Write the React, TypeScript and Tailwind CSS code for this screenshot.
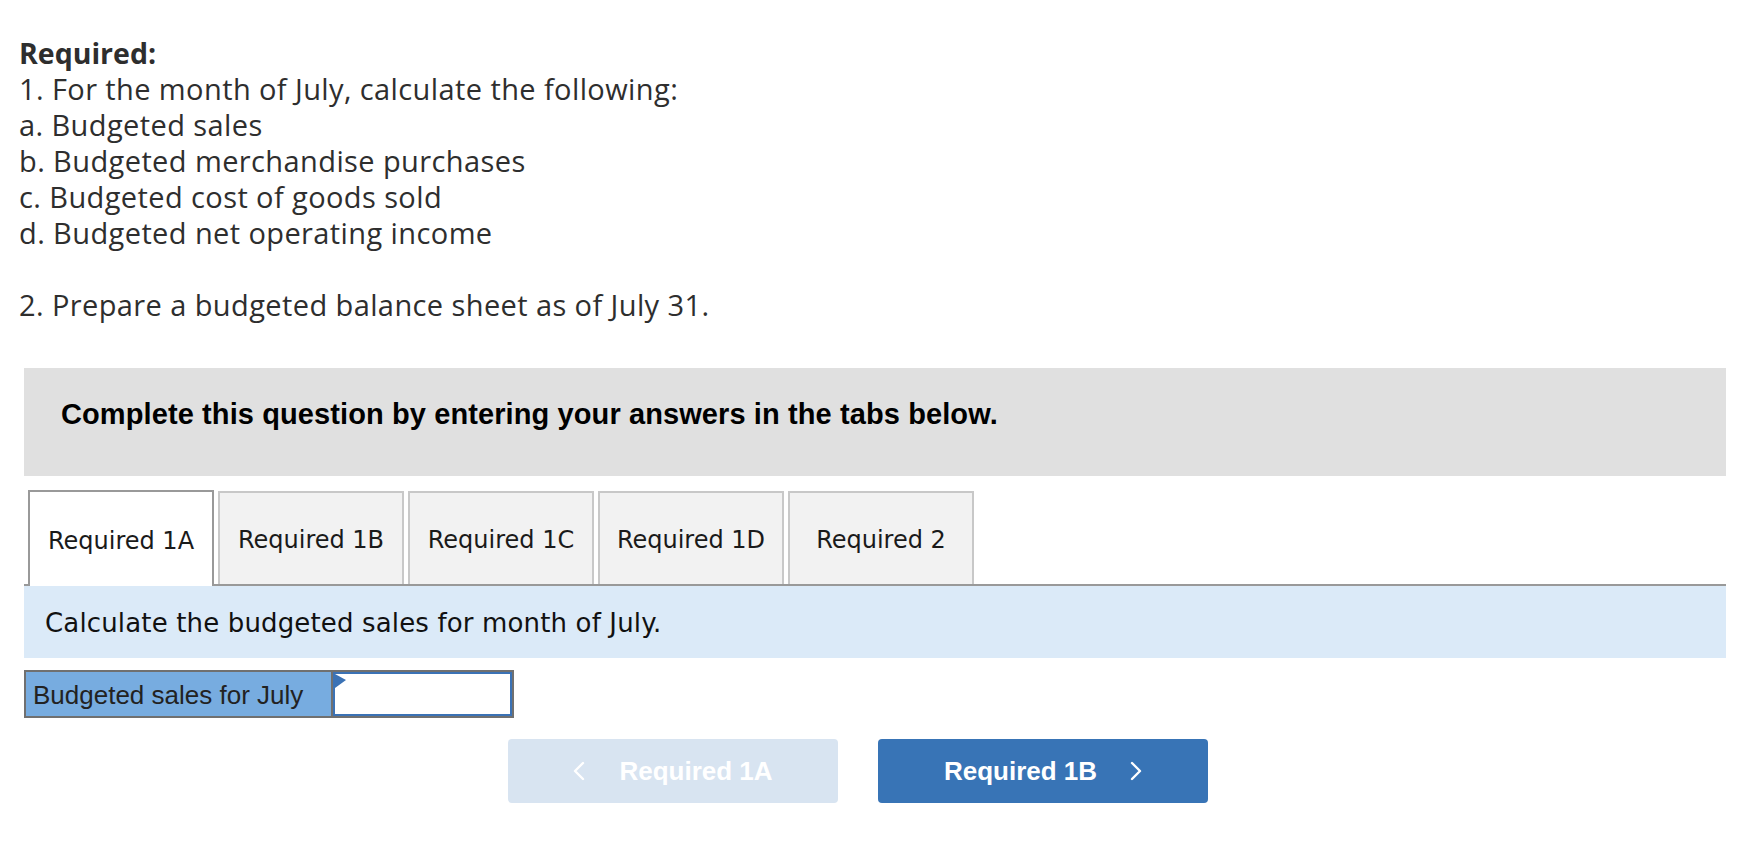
import React from "react";

const tabs = ["Required 1A", "Required 1B", "Required 1C", "Required 1D", "Required 2"];

function Chevron({ dir }: { dir: "left" | "right" }) {
  return (
    <svg width="12" height="20" viewBox="0 0 12 20" fill="none">
      <polyline
        points={dir === "left" ? "10,2 2,10 10,18" : "2,2 10,10 2,18"}
        stroke="#ffffff"
        strokeWidth="2.4"
        strokeLinecap="round"
        strokeLinejoin="round"
      />
    </svg>
  );
}

export default function App() {
  return (
    <div className="w-[1760px] h-[856px] bg-white overflow-hidden">
      <div
        className="pt-[35px] pl-[19px] text-[29px] leading-[36px] tracking-[0.4px] text-[#2e2e2e]"
        style={{ fontFamily: "'Open Sans', Lato, sans-serif" }}
      >
        <div className="font-bold text-[28.5px] tracking-[0px]">Required:</div>
        <div>1. For the month of July, calculate the following:</div>
        <div>a. Budgeted sales</div>
        <div>b. Budgeted merchandise purchases</div>
        <div>c. Budgeted cost of goods sold</div>
        <div>d. Budgeted net operating income</div>
        <div className="h-[36px]"></div>
        <div>2. Prepare a budgeted balance sheet as of July 31.</div>
      </div>

      <div className="ml-[24px] w-[1702px] mt-[45px]">
        <div
          className="h-[108px] bg-[#e0e0e0] pt-[28px] pl-[37px] text-[29px] leading-[36px] tracking-[0.1px] font-bold text-black"
          style={{ fontFamily: "'Liberation Sans', Arial, sans-serif" }}
        >
          Complete this question by entering your answers in the tabs below.
        </div>

        <div
          className="mt-[14px] flex items-end gap-[4px] pl-[4px] border-b-2 border-[#999999]"
          style={{ fontFamily: "'DejaVu Sans', Verdana, sans-serif" }}
        >
          {tabs.map((t, i) =>
            i === 0 ? (
              <div
                key={t}
                className="w-[186px] h-[96px] -mb-[2px] bg-white border-2 border-b-0 border-[#999999] flex items-center justify-center pt-[4px] text-[24px] text-[#1a1a1a]"
              >
                {t}
              </div>
            ) : (
              <div
                key={t}
                className="w-[186px] h-[93px] bg-[#f2f2f2] border-2 border-b-0 border-[#c8c8c8] flex items-center justify-center pt-[2px] text-[24px] text-[#1a1a1a]"
              >
                {t}
              </div>
            )
          )}
        </div>

        <div
          className="h-[72px] bg-[#dbeaf8] flex items-center pl-[21px] pt-[2px] text-[26px] tracking-[0.15px] text-[#111111]"
          style={{ fontFamily: "'DejaVu Sans', Verdana, sans-serif" }}
        >
          Calculate the budgeted sales for month of July.
        </div>

        <div className="mt-[12px] flex w-[490px] h-[48px] border-2 border-[#707070]">
          <div
            className="w-[307px] bg-[#77ace0] border-r-2 border-[#707070] flex items-center pl-[7px] pt-[2px] text-[26px] text-[#222222]"
            style={{ fontFamily: "'Liberation Sans', Arial, sans-serif" }}
          >
            Budgeted sales for July
          </div>
          <div className="relative flex-1 border-2 border-[#3b72b5] bg-white">
            <svg
              className="absolute left-0 top-0"
              width="11"
              height="15"
              viewBox="0 0 11 15"
            >
              <polygon points="0,0 11,6 0,14" fill="#3b72b5" />
            </svg>
          </div>
        </div>

        <div
          className="mt-[21px] flex gap-[40px] ml-[484px]"
          style={{ fontFamily: "'Liberation Sans', Arial, sans-serif" }}
        >
          <div className="w-[330px] h-[64px] rounded-[4px] bg-[#d8e4f1] flex items-center justify-center gap-[34px] text-[26px] font-bold text-white">
            <Chevron dir="left" />
            <span>Required 1A</span>
          </div>
          <div className="w-[330px] h-[64px] rounded-[4px] bg-[#3874b6] flex items-center justify-center gap-[33px] text-[26px] font-bold text-white">
            <span>Required 1B</span>
            <Chevron dir="right" />
          </div>
        </div>
      </div>
    </div>
  );
}
